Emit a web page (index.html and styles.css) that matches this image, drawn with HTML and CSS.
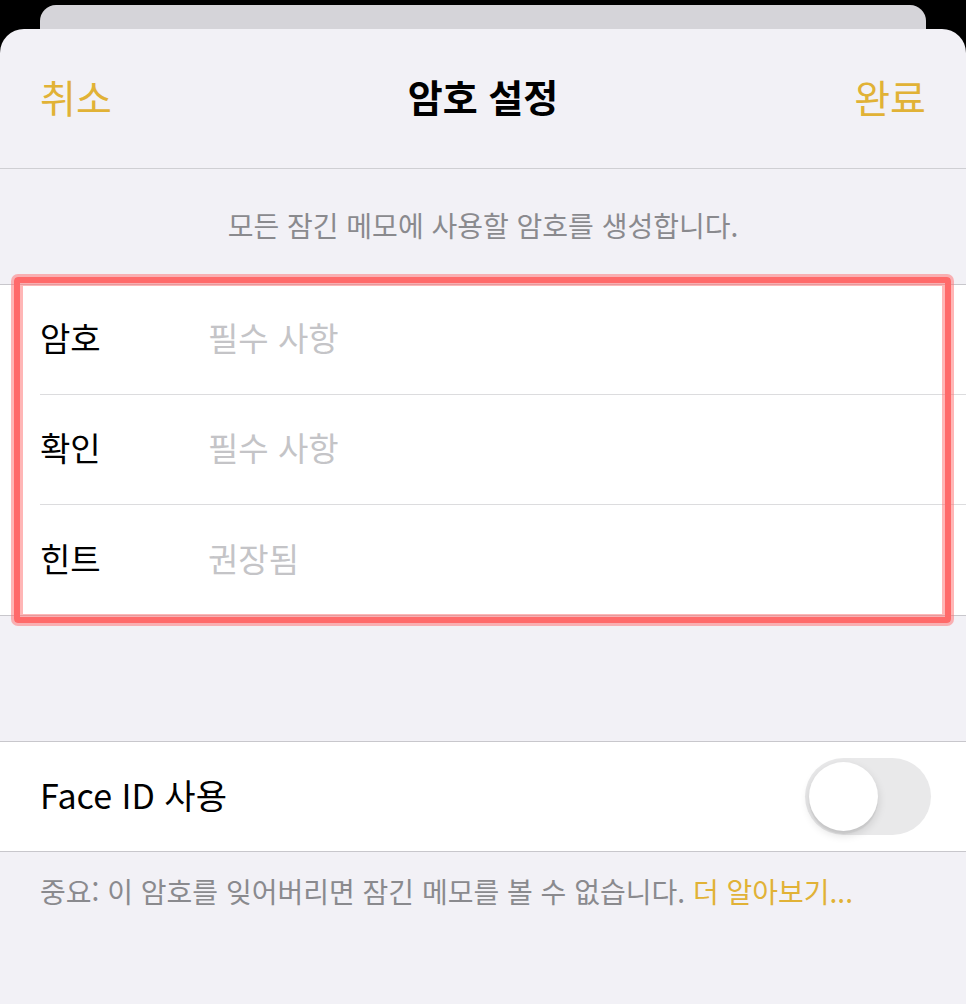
FILE: index.html
```html
<!DOCTYPE html>
<html lang="ko">
<head>
<meta charset="utf-8">
<title>암호 설정</title>
<link rel="stylesheet" href="styles.css">
</head>
<body>
<div class="back-sheet"></div>
<div class="sheet">
  <header class="nav">
    <span class="nav-btn">취소</span>
    <span class="nav-title">암호 설정</span>
    <span class="nav-btn nav-btn-right">완료</span>
  </header>
  <p class="desc">모든 잠긴 메모에 사용할 암호를 생성합니다.</p>
  <section class="group group-form">
    <div class="row"><div class="row-inner sep"><span class="label">암호</span><span class="placeholder">필수 사항</span></div></div>
    <div class="row"><div class="row-inner sep"><span class="label">확인</span><span class="placeholder">필수 사항</span></div></div>
    <div class="row"><div class="row-inner last"><span class="label">힌트</span><span class="placeholder">권장됨</span></div></div>
    <div class="highlight"></div>
  </section>
  <section class="group group-faceid">
    <div class="row face-row">
      <span class="label face-label">Face ID 사용</span>
      <span class="toggle"><span class="knob"></span></span>
    </div>
  </section>
  <p class="footer">중요: 이 암호를 잊어버리면 잠긴 메모를 볼 수 없습니다. <span class="link">더 알아보기...</span></p>
</div>
</body>
</html>
```
FILE: styles.css
```css
* { box-sizing: border-box; }
html, body { margin: 0; padding: 0; }
body {
  background: #000;
  font-family: "Noto Sans CJK KR", "Noto Sans", sans-serif;
  width: 966px;
  height: 1004px;
  overflow: hidden;
}
.back-sheet {
  margin: 5px 40px 0;
  height: 24px;
  background: #d5d4d9;
  border-radius: 16px 16px 0 0;
}
.sheet {
  background: #f2f1f6;
  border-radius: 24px 24px 0 0;
  height: 975px;
}
.nav {
  height: 140px;
  display: grid;
  grid-template-columns: 1fr auto 1fr;
  align-items: center;
  padding: 0 40px 5px;
  border-bottom: 1px solid #cfcfd3;
}
.nav-btn {
  font-size: 39px;
  color: #e1b236;
  line-height: 1;
}
.nav-btn-right { justify-self: end; }
.nav-title {
  font-size: 38px;
  font-weight: 700;
  color: #000;
  line-height: 1;
}
.desc {
  margin: 0;
  height: 115px;
  display: flex;
  align-items: center;
  justify-content: center;
  padding-bottom: 4px;
  font-size: 28px;
  color: #8a8a8e;
}
.group {
  background: #fff;
  border-top: 1px solid #c8c7cc;
  border-bottom: 1px solid #c8c7cc;
}
.group-form { position: relative; }
.row { padding-left: 40px; }
.row-inner {
  display: flex;
  align-items: center;
  height: 110px;
  padding-bottom: 5px;
}
.row-inner.sep { border-bottom: 1px solid #dcdcde; }
.label {
  font-size: 33px;
  color: #000;
  width: 168px;
  flex: none;
}
.placeholder {
  font-size: 33px;
  color: #c4c4c7;
}
.highlight {
  position: absolute;
  top: -8px;
  bottom: -8px;
  left: 14px;
  right: 15px;
  border: 6px solid #ff6a6a;
  border-radius: 4px;
  box-shadow: 0 0 0 3px rgba(255, 110, 110, 0.5), inset 0 0 0 3px rgba(255, 110, 110, 0.5);
}
.group-faceid { margin-top: 125px; }
.face-row {
  height: 109px;
  display: flex;
  align-items: center;
  justify-content: space-between;
  padding-right: 35px;
}
.face-label { width: auto; font-size: 34px; padding-bottom: 4px; }
.toggle {
  width: 126px;
  height: 77px;
  border-radius: 39px;
  background: #e9e9ea;
  padding: 4px 0 0 4px;
  display: block;
}
.knob {
  display: block;
  width: 69px;
  height: 69px;
  border-radius: 50%;
  background: #fff;
  box-shadow: 0 4px 10px rgba(0, 0, 0, 0.14), 0 3px 1px rgba(0, 0, 0, 0.05);
}
.footer {
  margin: 0;
  padding: 23px 40px 0;
  font-size: 28px;
  color: #8a8a8e;
  line-height: 1.2;
}
.link { color: #e1b236; }
```
